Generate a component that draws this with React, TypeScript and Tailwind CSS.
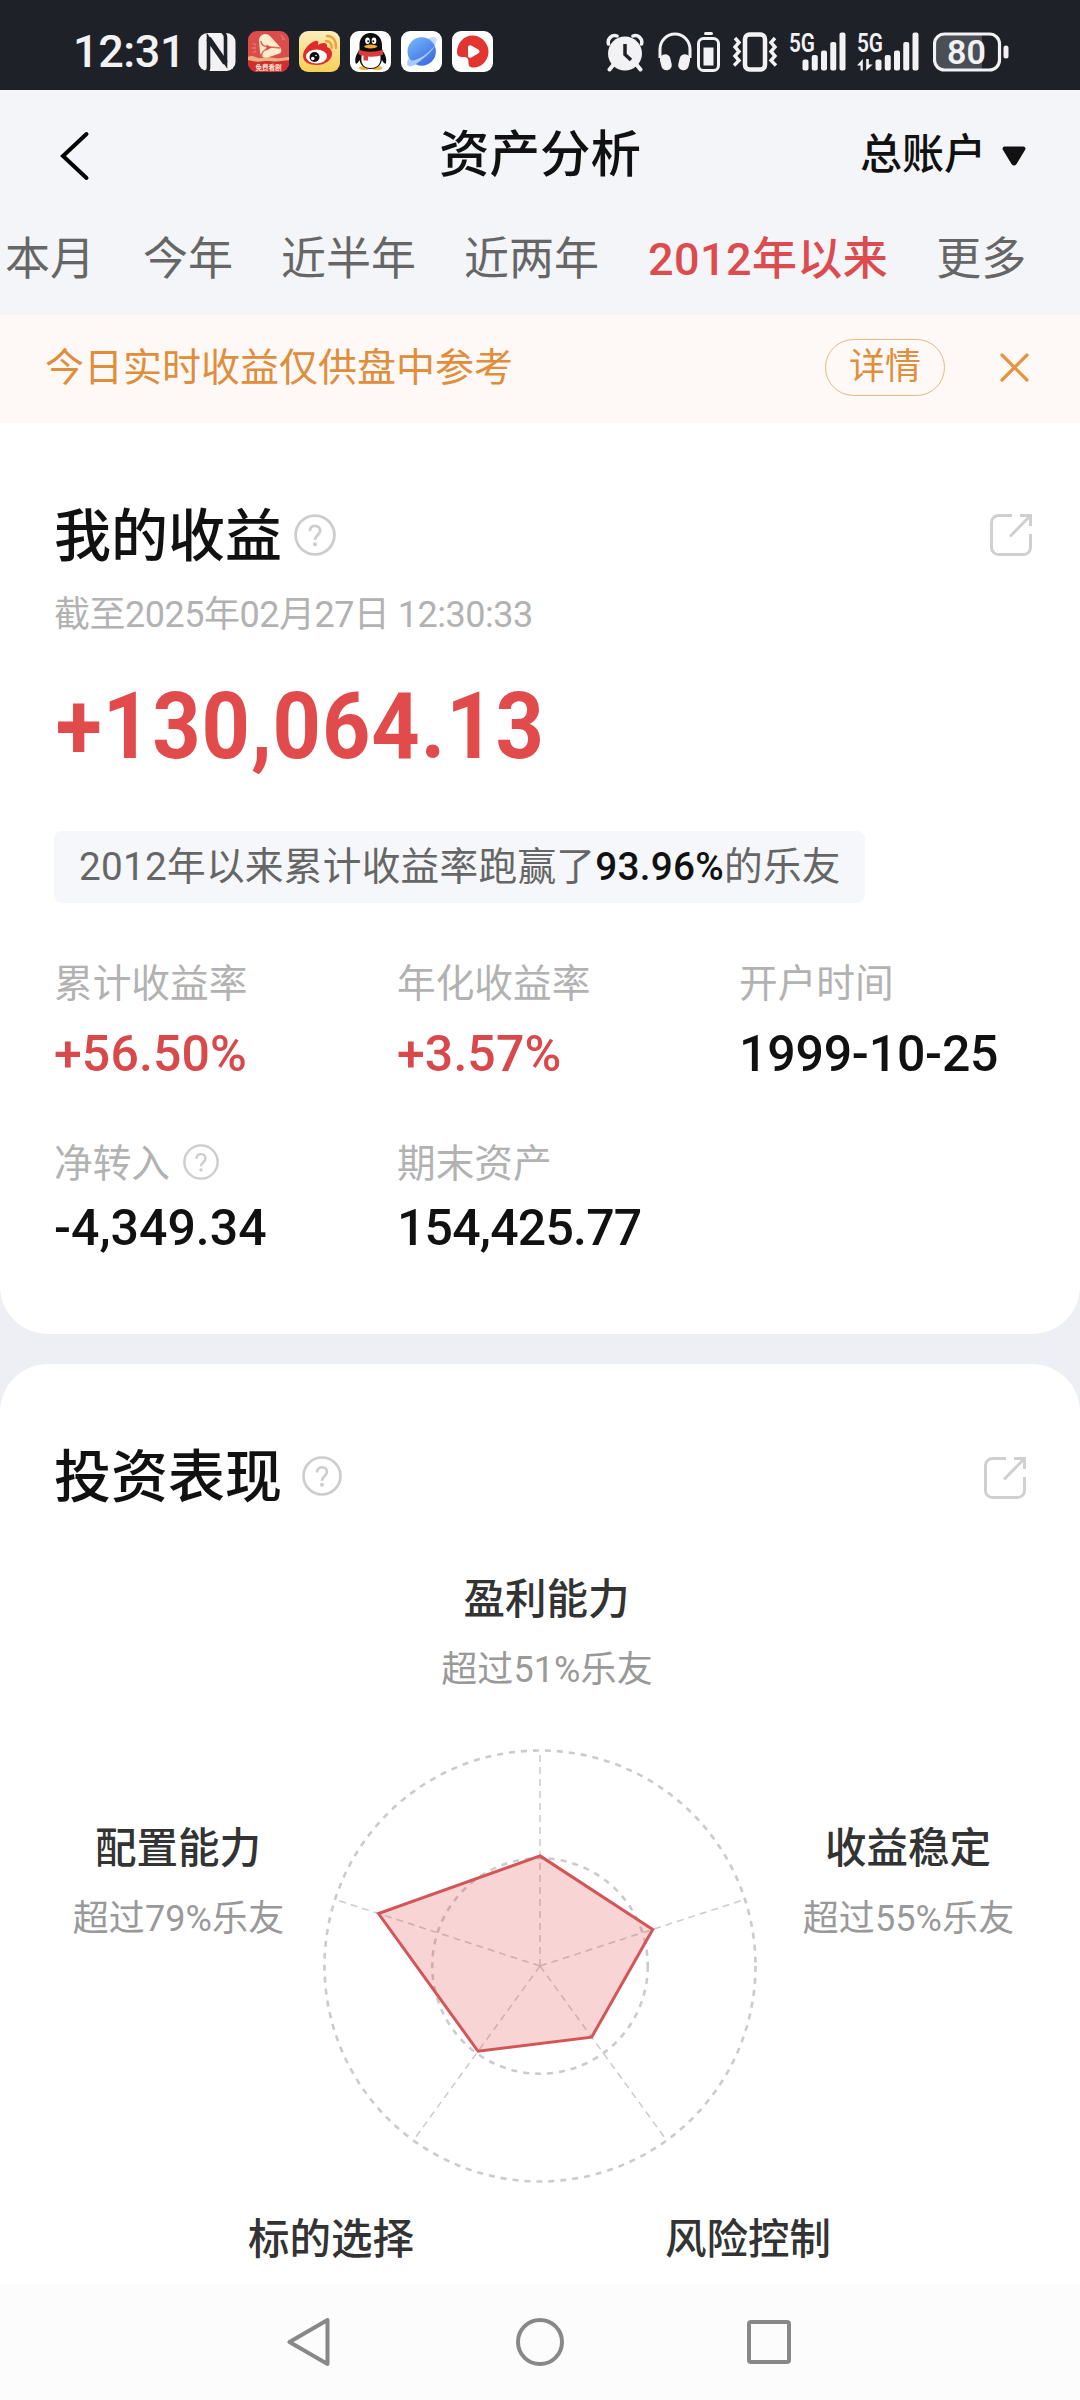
import { ReactNode, useState } from 'react'

const tabs = ['本月', '今年', '近半年', '近两年', '2012年以来', '更多']

interface Stat {
  label: string
  value: string
  color: string
  spacing: string
  help?: boolean
}

const stats: Stat[] = [
  { label: '累计收益率', value: '+56.50%', color: 'text-[#d9494b]', spacing: 'tracking-[0.1px]' },
  { label: '年化收益率', value: '+3.57%', color: 'text-[#d9494b]', spacing: 'tracking-[0.1px]' },
  { label: '开户时间', value: '1999-10-25', color: 'text-[#111111]', spacing: 'tracking-[-0.2px]' },
  { label: '净转入', value: '-4,349.34', color: 'text-[#111111]', spacing: 'tracking-[0px]', help: true },
  { label: '期末资产', value: '154,425.77', color: 'text-[#111111]', spacing: 'tracking-[-0.8px]' },
]

// label anchors are in the chart's own coordinates
const abilities = [
  { name: '盈利能力', rank: '超过51%乐友', x: 546.5, y: 74 },
  { name: '收益稳定', rank: '超过55%乐友', x: 908, y: 323 },
  { name: '风险控制', rank: '', x: 748, y: 714 },
  { name: '标的选择', rank: '', x: 331, y: 714 },
  { name: '配置能力', rank: '超过79%乐友', x: 178, y: 323 },
]
const scores = [0.511, 0.55, 0.408, 0.489, 0.788]

const CX = 540
const CY = 426
const R = 215.5

const point = (index: number, ratio: number) => {
  const angle = (index * 72 - 90) * (Math.PI / 180)
  return [CX + Math.cos(angle) * R * ratio, CY + Math.sin(angle) * R * ratio]
}

function HelpIcon({ size }: { size: number }) {
  return (
    <svg width={size} height={size} viewBox="0 0 42 42" fill="none" stroke="#cdcdcd" strokeWidth="2.8">
      <circle cx="21" cy="21" r="19.4" />
      <path d="M15.8 17.2c0-3.4 2.2-5.4 5.2-5.4s5.2 2 5.2 5c0 4-5.2 4.600-5.200 9.200" />
      <circle cx="21" cy="30.200" r="2" fill="#cdcdcd" stroke="none" />
    </svg>
  )
}

function ShareIcon() {
  return (
    <svg width="42" height="42" viewBox="0 0 42 42" fill="none" stroke="#d0d0d0" strokeWidth="3">
      <path d="M22 1.500H8.500a7 7 0 0 0-7 7v25a7 7 0 0 0 7 7h25a7 7 0 0 0 7-7V20" />
      <path d="M30 1.500h10.500V12M40 2L20 22.500" />
    </svg>
  )
}

function NfcIcon() {
  return (
    <svg width="38" height="40" viewBox="0 0 38 40">
      <rect x="0.500" y="1" width="37" height="38" rx="9" fill="#f2f2f4" />
      <path d="M7.500 40q3-1 3-4V6.500L27.500 31V5q0-3-3-5" fill="none" stroke="#1f2129" strokeWidth="3.600" />
      <path d="M10.500 6.500L27.500 31" stroke="#1f2129" strokeWidth="5.500" />
    </svg>
  )
}

function DramaIcon() {
  return (
    <svg width="41" height="41" viewBox="0 0 41 41">
      <rect width="41" height="41" rx="9" fill="#dc4c4b" />
      <path d="M0 30h41v2a9 9 0 0 1-9 9H9a9 9 0 0 1-9-9z" fill="#cf2f33" />
      <path d="M0 26c5-3 8 2 13 1s8-1 14 0 9-1 14-1v3c-6 0-9 2-15 1.500s-9-1-14 0-8-1.500-12-1.500z" fill="#e9b280" />
      <path d="M14 4c3-2 6-1 8 1l10 11c2 3 2 6-2 7l-9 3c-6 2-8-1-9-5l-1-11c0-3 1-5 3-6z" fill="#fdeccb" />
      <path d="M13 10c0 4 3 6 9 6l10 1M22 16l-5 3c-3 2-4 4-3 7" fill="none" stroke="#dc6a5c" strokeWidth="1.500" />
      <path d="M18.500 13.500l5 3-5 3z" fill="#dc4c4b" />
      <path d="M5 12l3 2M4 17h4M5 22l3-2M33 4l2 3M37 8h-3" stroke="#ee8b7b" strokeWidth="1" />
      <text x="20.500" y="38.500" textAnchor="middle" fontSize="6.500" fontWeight="700" fill="#ffe9d2">免费看剧</text>
    </svg>
  )
}

function WeiboIcon() {
  return (
    <svg width="41" height="41" viewBox="0 0 41 41">
      <defs>
        <linearGradient id="weibo" x1="0" y1="0" x2="0" y2="1">
          <stop offset="0" stopColor="#fbeebd" />
          <stop offset="1" stopColor="#f6cf55" />
        </linearGradient>
      </defs>
      <rect width="41" height="41" rx="9" fill="url(#weibo)" />
      <path d="M4 25c0-7 8-14 12-15 3-1 4 1 3 4 4-3 10-3 9 2 3 1 5 3 5 7 0 6-7 11-15 11S4 31 4 25z" fill="#e02b2c" />
      <ellipse cx="17.500" cy="25.500" rx="10.500" ry="7" fill="#fff" />
      <circle cx="15.500" cy="26" r="5" fill="#111" />
      <circle cx="13.800" cy="27.500" r="1.700" fill="#fff" />
      <circle cx="17" cy="24.500" r="0.800" fill="#fff" />
      <path d="M28 5c6 0 9.500 5 9 12M27 10c4 0 6 3 5.500 7" fill="none" stroke="#eda03e" strokeWidth="2.400" strokeLinecap="round" />
    </svg>
  )
}

function PenguinIcon() {
  return (
    <svg width="41" height="41" viewBox="0 0 41 41">
      <rect width="41" height="41" rx="9" fill="#fff" />
      <ellipse cx="14.500" cy="37" rx="5.500" ry="2" fill="#f2b13c" />
      <ellipse cx="27" cy="37" rx="5.500" ry="2" fill="#f2b13c" />
      <path d="M20.700 2C13 2 9.500 8 9.500 14v5c-3 4-5 8-4 13 1 2 3-1 4-3 1 6 6 9 11.200 9s10.200-3 11.300-9c1 2 3 5 4 3 1-5-1-9-4-13v-5c0-6-4-12-11.300-12z" fill="#0d0d0f" />
      <path d="M12 23c2 2 15 2 18 0 2 8-1 14-9.300 14S10 31 12 23z" fill="#fff" />
      <path d="M8.500 18.500c7 3 17 3 24.500 0v5c-4 2-10 2.500-15 2v4h-4.500v-5c-2 0-4-.5-5-1.500z" fill="#dd3a3c" />
      <ellipse cx="17.500" cy="9.800" rx="2.300" ry="3.200" fill="#fff" />
      <ellipse cx="24" cy="9.800" rx="2.300" ry="3.200" fill="#fff" />
      <circle cx="18.200" cy="10.200" r="1" fill="#111" />
      <circle cx="23.300" cy="10.200" r="1" fill="#111" />
      <ellipse cx="20.700" cy="15.500" rx="6.500" ry="1.900" fill="#f2a93b" />
    </svg>
  )
}

function BrowserIcon() {
  return (
    <svg width="41" height="41" viewBox="0 0 41 41">
      <defs>
        <linearGradient id="planet" x1="0.200" y1="0" x2="0.900" y2="1">
          <stop offset="0" stopColor="#74b3fb" />
          <stop offset="1" stopColor="#3664de" />
        </linearGradient>
      </defs>
      <rect width="41" height="41" rx="9" fill="#fff" />
      <ellipse cx="20.700" cy="20.700" rx="20" ry="6.500" transform="rotate(-45 20.700 20.700)" fill="#ccd9fb" />
      <circle cx="20.700" cy="20.500" r="14.200" fill="url(#planet)" />
      <path d="M7 29c-2 8 5 7 12 1C26 25 32 19 34 14c-6 8-19 18-27 15z" fill="#a5cbfd" />
    </svg>
  )
}

function VideoIcon() {
  return (
    <svg width="41" height="41" viewBox="0 0 41 41">
      <rect width="41" height="41" rx="9" fill="#fff" />
      <path d="M20.500 4.500C29 4.500 36.500 12 36.500 20.500S30 36.500 21.500 36.500c-4 0-5-2-5-5 0-4-1-5.500-5.500-5.500-4 0-6-1-6-5C5 12 12 4.500 20.500 4.500z" fill="#e2352f" />
      <path d="M16 16.500c0-2 1.500-2.800 3.200-1.900l7 4c1.800 1 1.800 2.800 0 3.800l-7 4c-1.700.9-3.200.1-3.200-1.900z" fill="#fff" />
    </svg>
  )
}

function Signal({ width, start, roaming }: { width: number; start: number; roaming?: boolean }) {
  return (
    <svg className="overflow-visible" width={width} height="40" viewBox={`0 0 ${width} 40`} fill="#f2f2f4">
      <text x="0" y="19.500" fontSize="25" fontWeight="600" textLength="26" lengthAdjust="spacingAndGlyphs">5G</text>
      {[11, 15.5, 20, 28.5, 38].map((height, index) => (
        <rect key={index} x={start + index * 9.25} y={38.5 - height} width="6" height={height} rx="2" />
      ))}
      {roaming && <path d="M0 33.500L5.800 27v11.500H3.500v-5zM9.200 27v11.500l6.500-6h-3.900V27z" />}
    </svg>
  )
}

function StatusBar() {
  return (
    <div className="flex h-[90px] items-center bg-[#1f2129] pt-[13px] pl-[73px] pr-[71px] text-[#f2f2f4]">
      <span className="w-[125px] text-[45px] leading-[40px] font-medium tracking-[-0.4px]">12:31</span>
      <NfcIcon />
      <div className="ml-[11.5px] flex items-center gap-2.5">
        <DramaIcon />
        <WeiboIcon />
        <PenguinIcon />
        <BrowserIcon />
        <VideoIcon />
      </div>
      <div className="ml-auto flex items-center">
        <svg width="38" height="40" viewBox="0 0 38 40" fill="#f2f2f4">
          <circle cx="19" cy="21.500" r="17" />
          <path d="M2.500 12C1 7 6 2 11 4M35.500 12C37 7 32 2 27 4" fill="none" stroke="#f2f2f4" strokeWidth="3.500" strokeLinecap="round" />
          <path d="M8 32l-4.500 5.500M30 32l4.500 5.500" stroke="#f2f2f4" strokeWidth="4" strokeLinecap="round" />
          <path d="M19 12v10.500l6 5.500" fill="none" stroke="#1f2129" strokeWidth="3.500" />
        </svg>
        <svg className="ml-[14px]" width="34" height="40" viewBox="0 0 34 40">
          <path d="M2 26V17.500a15 15.500 0 0 1 30 0V26" fill="none" stroke="#f2f2f4" strokeWidth="3" />
          <rect x="2.500" y="22.500" width="10.500" height="16" rx="5" transform="rotate(-14 7 30)" fill="#f2f2f4" />
          <rect x="21" y="22.500" width="10.500" height="16" rx="5" transform="rotate(14 27 30)" fill="#f2f2f4" />
        </svg>
        <svg className="ml-[5px]" width="23" height="40" viewBox="0 0 23 40">
          <rect x="7" y="0" width="9" height="3" rx="1.500" fill="#f2f2f4" />
          <rect x="1.500" y="6.500" width="20" height="32" rx="5" fill="none" stroke="#f2f2f4" strokeWidth="3" />
          <rect x="6.500" y="15.500" width="10" height="18" fill="#f2f2f4" />
        </svg>
        <svg className="ml-[12px]" width="46" height="40" viewBox="0 0 46 40" fill="none" stroke="#f2f2f4">
          <rect x="13" y="2.500" width="20" height="35" rx="4.500" strokeWidth="4.500" />
          <path d="M3 6l4 4.500-4 4.500 4 4.500-4 4.500 4 4.500-5 5M43 6l-4 4.500 4 4.500-4 4.500 4 4.500-4 4.500 5 5" strokeWidth="3.400" />
        </svg>
        <div className="ml-[11px]"><Signal width={57} start={13.5} /></div>
        <div className="ml-[11px]"><Signal width={62} start={18.5} roaming /></div>
        <svg className="ml-[14px]" width="76" height="40" viewBox="0 0 76 40">
          <path d="M10 3h39v34H10q-7 0-7-7V10q0-7 7-7z" fill="#4b4e55" />
          <rect x="1.500" y="2" width="65" height="36" rx="10" fill="none" stroke="#f2f2f4" strokeWidth="3.200" />
          <rect x="70.500" y="13.500" width="5" height="13" rx="2.500" fill="#f2f2f4" />
          <text x="33.500" y="32" textAnchor="middle" fontSize="34" fontWeight="600" fill="#f2f2f4">80</text>
        </svg>
      </div>
    </div>
  )
}

function Header() {
  const [activeTab, setActiveTab] = useState('2012年以来')

  return (
    <header className="h-[225px] bg-[#f4f5f9]">
      <div className="grid h-[132px] grid-cols-3 items-center px-[54px]">
        <svg className="ml-[4px]" width="32" height="52" viewBox="0 0 32 52" fill="none" stroke="#000" strokeWidth="4" strokeLinecap="round">
          <path d="M28.500 4L5 26l23.500 22" />
        </svg>
        <h1 className="pb-[3px] text-center text-[50.5px] leading-[60px] font-medium text-[#111111]">资产分析</h1>
        <button className="flex items-center justify-end gap-[16px] text-[42px] leading-[50px] font-medium text-[#111111]">
          <span className="pb-[3px] whitespace-nowrap">总账户</span>
          <svg width="24" height="20" viewBox="0 0 24 20" fill="#111111">
            <path d="M2.500 0.500h19q3 0.800 1.500 3.500L14.500 18q-2.500 3-5 0L1 4Q-0.500 1.300 2.500 0.500z" />
          </svg>
        </button>
      </div>
      <nav className="flex h-[75px] items-center gap-12 pl-[5px] text-[45px] leading-[60px] whitespace-nowrap text-[#666666]">
        {tabs.map((tab) => (
          <button
            key={tab}
            onClick={() => setActiveTab(tab)}
            className={activeTab === tab ? 'pl-px font-medium tracking-[0.4px] text-[#dc4c4e]' : ''}
          >
            {tab}
          </button>
        ))}
      </nav>
    </header>
  )
}

function Notice() {
  return (
    <div className="flex h-[108px] items-center bg-[#fef9f6] pr-[51px] pb-[3px] pl-[45px] text-[#e08d3c]">
      <p className="text-[39px] leading-[50px]">今日实时收益仅供盘中参考</p>
      <button className="ml-auto flex h-[57px] w-[120px] items-center justify-center rounded-full border border-[#e5b887] pb-[2px] text-[36px] leading-[40px]">
        <span>详情</span>
      </button>
      <svg className="ml-[55px]" width="29" height="29" viewBox="0 0 29 29" stroke="#e59540" strokeWidth="3.200" strokeLinecap="round">
        <path d="M2 2l25 25M27 2L2 27" />
      </svg>
    </div>
  )
}

function SectionTitle({ children }: { children: ReactNode }) {
  return <h2 className="pt-[3px] text-[57px] leading-[70px] font-medium text-[#111111]">{children}</h2>
}

function EarningsCard() {
  return (
    <section className="h-[911px] rounded-b-[48px] bg-white px-[54px] pt-[77px]">
      <div className="flex h-[70px] items-center">
        <SectionTitle>我的收益</SectionTitle>
        <span className="ml-[12px]"><HelpIcon size={42} /></span>
        <span className="mr-[-6px] ml-auto"><ShareIcon /></span>
      </div>
      <p className="mt-5 text-[36px] leading-[50px] tracking-[-0.5px] text-[#b2b2b2]">截至2025年02月27日 12:30:33</p>
      {/* the headline figure is set in condensed digits */}
      <p className="mt-[37px] w-fit origin-left scale-x-[0.918] pl-[2px] text-[92px] leading-[100px] font-bold tracking-[1px] text-[#e24b4c]">+130,064.13</p>
      <div className="mt-[54px] flex h-[72px] w-[811px] items-center rounded-lg bg-[#f6f7fa] pl-[25px] text-[38.7px] leading-[50px] tracking-[0.25px] whitespace-nowrap text-[#666666]">
        2012年以来累计收益率跑赢了<span className="font-medium text-[#111111]">93.96%</span>的乐友
      </div>
      <div className="mt-[55px] grid grid-cols-[343px_342px_1fr] gap-y-[54px]">
        {stats.map((stat, index) => (
          <div key={stat.label}>
            <div className="flex h-[50px] items-center text-[38.7px] leading-[50px] text-[#b2b2b2]">
              <span className="pt-px">{stat.label}</span>
              {stat.help && <span className="mb-0.5 ml-[13px]"><HelpIcon size={36} /></span>}
            </div>
            <p className={`${index < 3 ? 'mt-4' : 'mt-2.5'} text-[50px] leading-[60px] font-medium ${stat.spacing} ${stat.color}`}>
              {stat.value}
            </p>
          </div>
        ))}
      </div>
    </section>
  )
}

function RadarChart() {
  const outline = scores.map((score, index) => point(index, score).join(',')).join(' ')

  return (
    <svg className="block" width="1080" height="744" viewBox="0 0 1080 744">
      <g fill="none" stroke="#cbcbcb">
        <circle cx={CX} cy={CY} r={R} strokeWidth="2.600" strokeDasharray="6 6" />
        <circle cx={CX} cy={CY} r={R / 2} strokeWidth="2.600" strokeDasharray="6 6" />
        {scores.map((_, index) => {
          const [x, y] = point(index, 0.98)
          return <line key={index} x1={CX} y1={CY} x2={x} y2={y} strokeWidth="1.500" strokeDasharray="7 5" />
        })}
      </g>
      <polygon points={outline} fill="#e24b4c" fillOpacity="0.24" stroke="#d45557" strokeWidth="3" />
      {abilities.map((ability) => (
        <g key={ability.name} textAnchor="middle">
          <text x={ability.x} y={ability.y} fontSize="41.500" fontWeight="500" fill="#333333">{ability.name}</text>
          {ability.rank && <text x={ability.x + 0.5} y={ability.y + 68} fontSize="36" letterSpacing="0.100" fill="#999999">{ability.rank}</text>}
        </g>
      ))}
    </svg>
  )
}

function PerformanceCard() {
  return (
    <section className="mt-[30px] h-[920px] rounded-t-[48px] bg-white pt-[77px]">
      <div className="flex h-[70px] items-center px-[54px]">
        <SectionTitle>投资表现</SectionTitle>
        <span className="ml-[20px]"><HelpIcon size={40} /></span>
        <span className="mt-1 ml-auto"><ShareIcon /></span>
      </div>
      <div className="mt-[29px]"><RadarChart /></div>
    </section>
  )
}

function NavigationBar() {
  return (
    <div className="flex h-[116px] items-center justify-between bg-[#fcfcfc] pr-[288px] pl-[287px]">
      <svg width="46" height="50" viewBox="0 0 46 50" fill="none" stroke="#888888" strokeWidth="4" strokeLinejoin="round">
        <path d="M40.500 3v44L2.500 25z" />
      </svg>
      <svg width="50" height="50" viewBox="0 0 50 50" fill="none" stroke="#888888" strokeWidth="4">
        <circle cx="25" cy="25" r="22" />
      </svg>
      <svg width="46" height="50" viewBox="0 0 46 50" fill="none" stroke="#888888" strokeWidth="4">
        <rect x="3" y="5" width="40" height="40" rx="2" />
      </svg>
    </div>
  )
}

export default function App() {
  return (
    <div className="h-[2400px] w-[1080px] overflow-hidden bg-[#eeeff4] font-['Roboto','Noto_Sans_CJK_SC',sans-serif]">
      <StatusBar />
      <Header />
      <Notice />
      <EarningsCard />
      <PerformanceCard />
      <NavigationBar />
    </div>
  )
}
